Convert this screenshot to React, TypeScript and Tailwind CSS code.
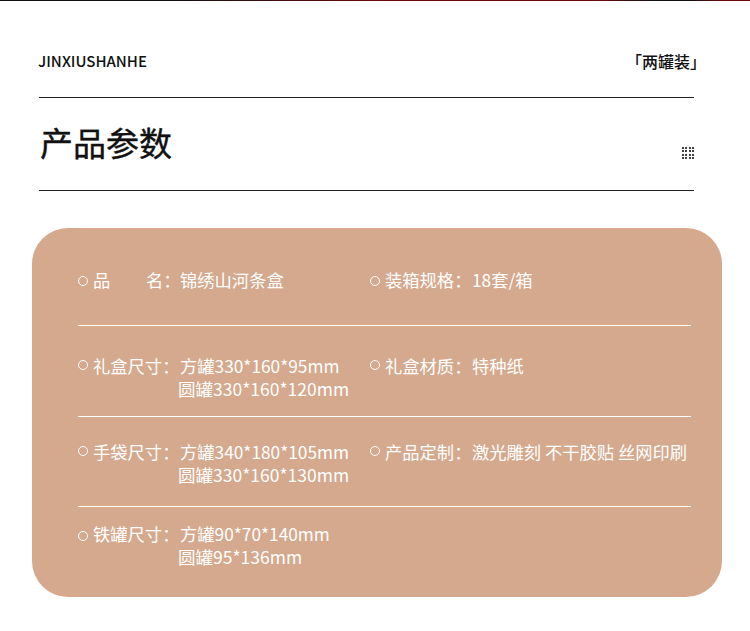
const font = { fontFamily: '"Noto Sans CJK SC", "Noto Sans", sans-serif' };

function Spec({ label, lines, gapped, dot = "mt-[6px]" }: { label: string; lines: string[]; gapped?: boolean; dot?: string }) {
  return (
    <div className="flex items-start">
      <span className={`${dot} h-[10px] w-[10px] shrink-0 rounded-full border-[1.3px] border-white`} />
      <div className="ml-[5px] flex w-[87px] shrink-0 justify-between">
        {gapped ? (
          <>
            <span>品</span>
            <span className="w-[34px] whitespace-nowrap">名：</span>
          </>
        ) : (
          <span className="whitespace-nowrap">{label}</span>
        )}
      </div>
      <div className="whitespace-nowrap">
        {lines.map((line, i) => (
          <div key={line} className={i > 0 ? "-ml-[2px] text-[17.5px]" : ""}>{line}</div>
        ))}
      </div>
    </div>
  );
}

function DotGrid() {
  return (
    <div className="grid grid-cols-4 gap-[1.5px]">
      {Array.from({ length: 16 }).map((_, i) => (
        <span key={i} className="h-[2px] w-[2px] bg-[#444444]" />
      ))}
    </div>
  );
}

export default function App() {
  return (
    <div className="h-[631px] w-[750px] overflow-hidden bg-white" style={font}>
      <div className="h-px bg-[linear-gradient(to_right,#111111_0%,#111111_23%,#6b0a0a_50%,#6b0a0a_80%,#111111_87%,#111111_92%,#6b0a0a_96%,#6b0a0a_100%)]" />

      <header className="ml-[39px] w-[655px]">
        <div className="flex h-[96px] items-center justify-between pt-[24px]">
          <span className="-ml-px text-[15px] font-medium text-[#111111]">JINXIUSHANHE</span>
          <span className="-mr-[12px] text-[16px] font-medium text-[#111111]">「两罐装」</span>
        </div>
        <div className="flex h-[94px] items-center justify-between border-y border-[#222222]">
          <h1 className="mb-[4px] ml-px text-[33px] font-normal leading-none text-[#111111] [-webkit-text-stroke:0.4px_#111111]">产品参数</h1>
          <div className="mt-[18px] flex">
            <DotGrid />
          </div>
        </div>
      </header>

      <section className="ml-[32px] mt-[37px] h-[369px] w-[690px] rounded-[36px] bg-[#d4a98d] pl-[46px] pr-[31px] text-[17.3px] leading-[23px] text-white">
        <div className="grid h-[98px] grid-cols-[292px_1fr] items-start border-b border-white pt-[40px]">
          <Spec label="品名：" gapped dot="mt-[8px]" lines={["锦绣山河条盒"]} />
          <Spec label="装箱规格：" dot="mt-[8px]" lines={["18套/箱"]} />
        </div>
        <div className="grid h-[91px] grid-cols-[292px_1fr] items-start border-b border-white pt-[28px]">
          <Spec label="礼盒尺寸：" lines={["方罐330*160*95mm", "圆罐330*160*120mm"]} />
          <Spec label="礼盒材质：" lines={["特种纸"]} />
        </div>
        <div className="grid h-[90px] grid-cols-[292px_1fr] items-start border-b border-white pt-[23px]">
          <Spec label="手袋尺寸：" lines={["方罐340*180*105mm", "圆罐330*160*130mm"]} />
          <Spec label="产品定制：" lines={["激光雕刻 不干胶贴 丝网印刷"]} />
        </div>
        <div className="grid grid-cols-[292px_1fr] items-start pt-[15px]">
          <Spec label="铁罐尺寸：" dot="mt-[9px]" lines={["方罐90*70*140mm", "圆罐95*136mm"]} />
        </div>
      </section>
    </div>
  );
}
